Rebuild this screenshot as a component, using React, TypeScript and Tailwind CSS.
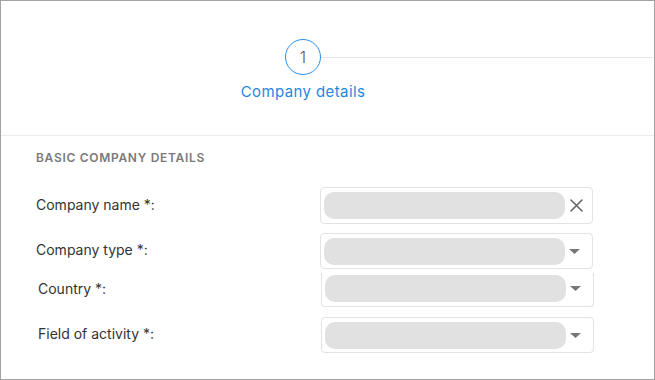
import React from "react";

const font = { fontFamily: "Inter, 'Noto Sans', 'Liberation Sans', sans-serif" };

function Caret() {
  return (
    <svg width="11" height="5" viewBox="0 0 11 5" className="block">
      <path d="M0 0 H11 L5.5 5 Z" fill="#777777" />
    </svg>
  );
}

function XIcon() {
  return (
    <svg width="13" height="13" viewBox="0 0 13 13" className="block">
      <path d="M1 1 L12 12 M12 1 L1 12" stroke="#666666" strokeWidth="1.6" strokeLinecap="round" />
    </svg>
  );
}

function Field({
  label,
  icon,
  boxClass,
  rowClass,
  labelClass,
}: {
  label: string;
  icon: "x" | "caret";
  boxClass: string;
  rowClass: string;
  labelClass: string;
}) {
  return (
    <div className={"flex items-center " + rowClass}>
      <div className={"pb-[3px] text-[14px] text-[#333333] " + labelClass}>{label}</div>
      <div className={"flex items-center border-[#e3e3e3] bg-white " + boxClass}>
        <div className="h-[27px] w-[241px] rounded-[10px] bg-[#e1e1e1]" />
        <div className={"flex flex-1 items-center " + (icon === "x" ? "pl-[5px]" : "pl-[4px]")}>
          {icon === "x" ? <XIcon /> : <Caret />}
        </div>
      </div>
    </div>
  );
}

export default function App() {
  return (
    <div className="h-[380px] w-[655px] border border-[#a3a3a3] bg-white" style={font}>
      <div className="h-[135px] border-b border-[#ececec]">
        <div className="flex items-center pt-[38px]">
          <div className="ml-[284px] flex h-[36px] w-[36px] items-center justify-center rounded-full border-[1.5px] border-[#2b8fe8] text-[16px] font-light text-[#555555]">
            1
          </div>
          <div className="h-px flex-1 bg-[#e8e8e8]" />
        </div>
        <div className="ml-[222px] mt-[7px] w-[160px] text-center text-[15px] leading-[20px] tracking-[0.4px] text-[#1f87e0]">
          Company details
        </div>
      </div>
      <div className="pt-[14px]">
        <div className="ml-[35px] text-[12px] font-semibold uppercase leading-[16px] tracking-[0.7px] text-[#7a7a7a]">
          Basic company details
        </div>
        <Field
          label="Company name *:"
          icon="x"
          rowClass="mt-[21px]"
          labelClass="ml-[35px] w-[284px]"
          boxClass="h-[37px] w-[273px] rounded-[4px] border pl-[3px]"
        />
        <Field
          label="Company type *:"
          icon="caret"
          rowClass="mt-[9px]"
          labelClass="ml-[35px] w-[284px]"
          boxClass="h-[36px] w-[273px] rounded-[4px] border pl-[3px]"
        />
        <Field
          label="Country *:"
          icon="caret"
          rowClass="mt-[4px]"
          labelClass="ml-[37px] w-[283px]"
          boxClass="h-[34px] w-[273px] rounded-b-[4px] border border-t-0 pl-[3px] pt-[2px] pb-[4px]"
        />
        <Field
          label="Field of activity *:"
          icon="caret"
          rowClass="mt-[10px]"
          labelClass="ml-[37px] w-[283px]"
          boxClass="h-[36px] w-[273px] rounded-[4px] border pl-[3px]"
        />
      </div>
    </div>
  );
}
